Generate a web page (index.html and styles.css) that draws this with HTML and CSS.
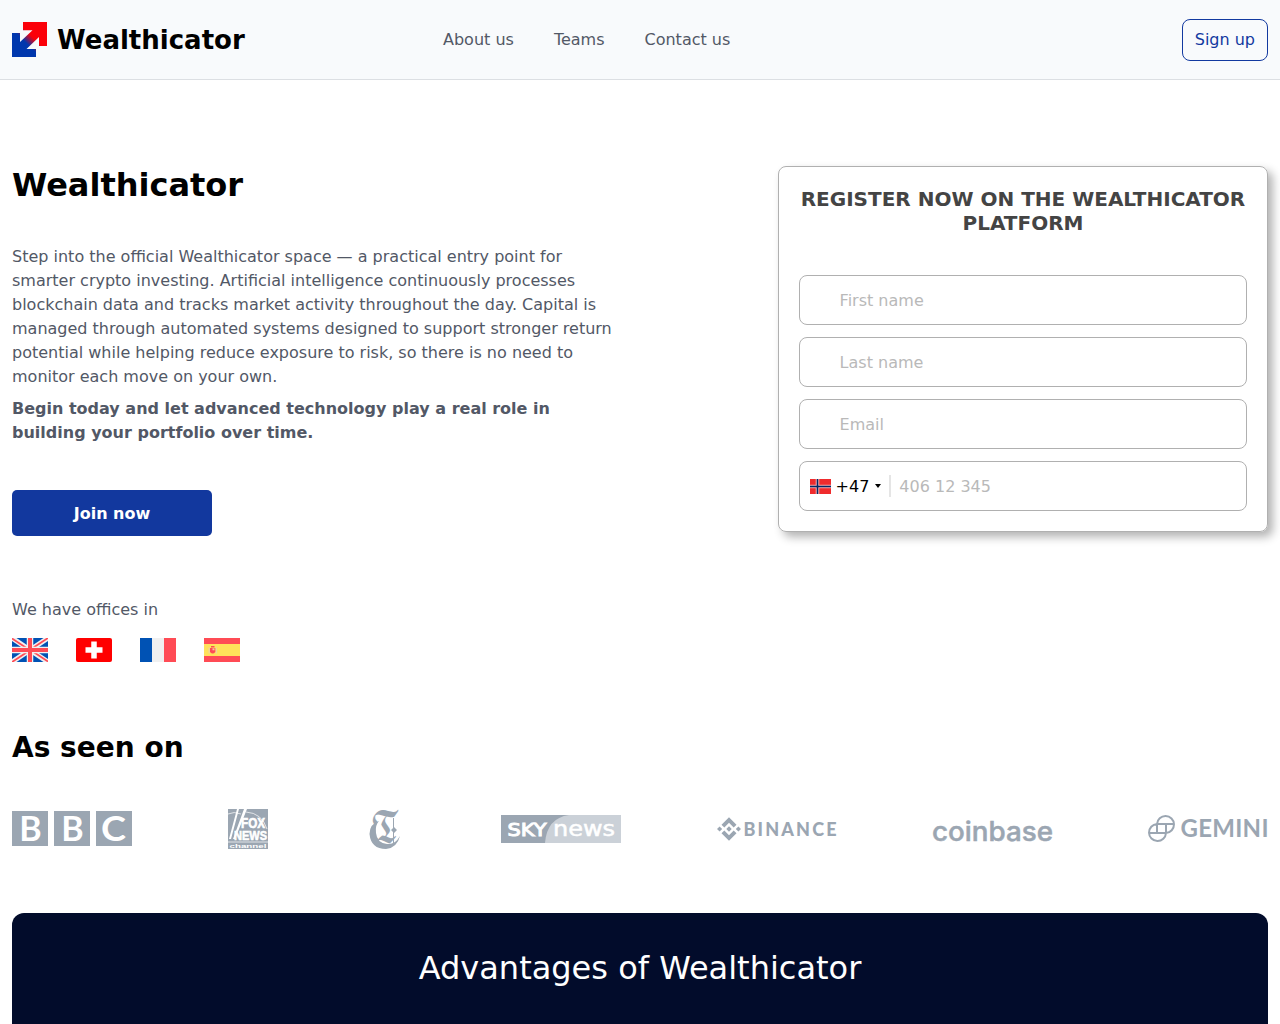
FILE: index.html
```html
<!DOCTYPE html>
<html lang="en">

<head>
    <meta charset="UTF-8">
    <meta name="viewport" content="width=device-width, initial-scale=1.0">
    <title>Wealthicator</title>
    <link rel="stylesheet" href="styles.css">
</head>

<body>
    <header class="header">
        <a class="logo" href="#">
            <svg width="35" height="35" viewBox="0 0 35 35">
                <defs>
                    <linearGradient id="arrows" x1="0" y1="1" x2="1" y2="0">
                        <stop offset="0.4" stop-color="#0037ad"/>
                        <stop offset="0.58" stop-color="#fb0009"/>
                    </linearGradient>
                </defs>
                <path d="M11 0H35V24H27V15L14.500 27H24V35H0V11H8V20L20.500 8.300H11Z" fill="url(#arrows)"/>
            </svg>
            <span>Wealthicator</span>
        </a>
        <nav class="nav">
            <a href="#">About us</a>
            <a href="#">Teams</a>
            <a href="#">Contact us</a>
        </nav>
        <a class="sign-up" href="#register">Sign up</a>
    </header>

    <main class="container">
        <section class="hero">
            <div class="hero-text">
                <h1>Wealthicator</h1>
                <p>Step into the official Wealthicator space — a practical entry point for smarter crypto investing. Artificial intelligence continuously processes blockchain data and tracks market activity throughout the day. Capital is managed through automated systems designed to support stronger return potential while helping reduce exposure to risk, so there is no need to monitor each move on your own.</p>
                <p><b>Begin today and let advanced technology play a real role in building your portfolio over time.</b></p>
                <a class="join" href="#register">Join now</a>
                <div class="offices">We have offices in</div>
                <div class="flags">
                    <svg width="36" height="24" viewBox="0 0 36 24">
                        <path fill="#0052b4" d="M0 0h36v24H0z"/>
                        <path stroke="#f0f0f0" stroke-width="5" d="M0 0L36 24M36 0L0 24"/>
                        <path stroke="#ff4b55" stroke-width="1.800" d="M0 .5L16 11M36 0L20 10.500M0 24L16 13.500M36 23.500L20 13"/>
                        <path stroke="#f0f0f0" stroke-width="6.500" d="M18 0v24M0 12h36"/>
                        <path stroke="#ff4b55" stroke-width="4" d="M18 0v24M0 12h36"/>
                    </svg>
                    <svg width="36" height="24" viewBox="0 0 36 24">
                        <rect width="36" height="24" rx="2" fill="#f00"/>
                        <path stroke="#fff" stroke-width="5.500" d="M18 3.500v17M9.500 12h17"/>
                    </svg>
                    <svg width="36" height="24" viewBox="0 0 36 24">
                        <path fill="#0052b4" d="M0 0h12v24H0z"/>
                        <path fill="#f0f0f0" d="M12 0h12v24H12z"/>
                        <path fill="#ff4b55" d="M24 0h12v24H24z"/>
                    </svg>
                    <svg width="36" height="24" viewBox="0 0 36 24">
                        <path fill="#ff4b55" d="M0 0h36v24H0z"/>
                        <path fill="#ffe15a" d="M0 6h36v12H0z"/>
                        <path fill="#f1d0a0" d="M4.500 9.500h1.300v6H4.500zM11.700 9.500H13v6h-1.300z"/>
                        <path fill="#ff4b55" d="M6 10h5.300v4q-2.500 3-5.300 0zM7 8h3.500v1.500H7z"/>
                        <path fill="#f3c4a0" d="M8.500 10.300h2v2h-2z"/>
                    </svg>
                </div>
            </div>

            <form class="register" id="register">
                <h2>REGISTER NOW ON THE WEALTHICATOR PLATFORM</h2>
                <input class="field" type="text" placeholder="First name">
                <input class="field" type="text" placeholder="Last name">
                <input class="field" type="email" placeholder="Email">
                <div class="field phone">
                    <svg width="21" height="15" viewBox="0 0 21 15">
                        <path fill="#ef2b2d" d="M0 0h21v15H0z"/>
                        <path stroke="#fff" stroke-width="3.600" stroke-opacity=".6" d="M7.500 0v15M0 7.500h21"/>
                        <path stroke="#002868" stroke-width="1.500" d="M7.500 0v15M0 7.500h21"/>
                    </svg>
                    <span class="code">+47</span>
                    <span class="caret"></span>
                    <input type="tel" placeholder="406 12 345">
                </div>
            </form>
        </section>

        <section class="seen-on">
            <h2>As seen on</h2>
            <div class="brands">
                <!-- BBC -->
                <svg width="120" height="40" viewBox="0 0 120 40" font-family="Lato, sans-serif" font-weight="bold" font-size="34" text-anchor="middle">
                    <path fill="#9ba6b2" d="M0 2h36v35H0zM42 2h36v35H42zM84 2h36v35H84z"/>
                    <text fill="#fff" x="18.500" y="31.500">B</text>
                    <text fill="#fff" x="60.500" y="31.500">B</text>
                    <text fill="#fff" x="101.500" y="31.500" textLength="25" lengthAdjust="spacingAndGlyphs">C</text>
                </svg>
                <!-- Fox News -->
                <svg width="40" height="40" viewBox="0 0 40 40" font-family="Liberation Sans, sans-serif" font-weight="bold">
                    <path fill="#9ba6b2" d="M0 0h40v40H0z"/>
                    <path fill="#fff" d="M9 0h2L3 30H1zM16 0h3L7 30H5z"/>
                    <path fill="none" stroke="#fff" stroke-width=".7" d="M0 5Q6 2 13 5M18 3Q34 4 39 20M0 33h40"/>
                    <text fill="#fff" stroke="#fff" stroke-width=".6" x="13" y="19" font-size="14" textLength="24" lengthAdjust="spacingAndGlyphs">FOX</text>
                    <text fill="#fff" stroke="#fff" stroke-width=".6" x="6" y="31" font-size="13" textLength="33" lengthAdjust="spacingAndGlyphs">NEWS</text>
                    <text fill="#fff" x="1.500" y="38.500" font-size="5.500" textLength="37" lengthAdjust="spacingAndGlyphs">channel</text>
                </svg>
                <!-- The New York Times -->
                <svg width="41" height="40" viewBox="0 0 41 40">
                    <path fill="#9ba6b2" d="M15 12Q5.500 15 5.500 25Q7 40 22 40Q33 39 36 27Q31 36 23 35Q13 34 12 24Q11 16 15 12zM30 18l3 3-3 3-3-3z"/>
                    <path stroke="#9ba6b2" d="M29.500 9v25"/>
                    <text class="times" x="21.500" y="33" font-size="41" text-anchor="middle" textLength="30" lengthAdjust="spacingAndGlyphs">𝕿</text>
                </svg>
                <!-- Sky News -->
                <svg width="120" height="40" viewBox="0 0 120 40" font-family="DejaVu Sans, sans-serif">
                    <path fill="#9ba6b2" d="M0 6h120v28H0z"/>
                    <path fill="#cbd1d8" d="M120 6H68Q46 9 44 34h76z"/>
                    <text fill="#fff" stroke="#fff" stroke-width="1" x="6.500" y="26.500" font-size="18" textLength="39" lengthAdjust="spacingAndGlyphs">SKY</text>
                    <text fill="#fff" stroke="#fff" stroke-width=".5" x="52" y="26.500" font-size="21" textLength="62" lengthAdjust="spacingAndGlyphs">news</text>
                </svg>
                <!-- Binance -->
                <svg width="120" height="40" viewBox="0 0 120 40" fill="#9ba6b2">
                    <path d="M4.500 15.700L12 8.200l7.500 7.500-2.800 2.800L12 13.800l-4.700 4.700zM4.500 24.300l2.800-2.800L12 26.200l4.700-4.700 2.800 2.800L12 31.800zM0 20l2.600-2.600L5.200 20l-2.600 2.600zM18.800 20l2.600-2.600L24 20l-2.600 2.600zM9.300 20L12 17.300l2.700 2.700-2.700 2.700z"/>
                    <text x="26.500" y="26.500" font-family="Lato, sans-serif" font-size="18" font-weight="900" textLength="93">BINANCE</text>
                </svg>
                <!-- Coinbase -->
                <svg width="120" height="40" viewBox="0 0 120 40" fill="#9ba6b2">
                    <text x="-1" y="31.500" font-family="Inter, sans-serif" font-size="27" font-weight="500" stroke="#9ba6b2" stroke-width=".5" textLength="121" lengthAdjust="spacingAndGlyphs">coinbase</text>
                </svg>
                <!-- Gemini -->
                <svg width="119" height="40" viewBox="0 0 119 40" fill="#9ba6b2">
                    <path fill="none" stroke="#9ba6b2" stroke-width="2" d="M8 15a8.500 8.500 0 1 1 9 9H8zM17 15v9a8.500 8.500 0 1 1-9-9zM0 24h8M17 15h7"/>
                    <text x="31.500" y="28" font-family="Lato, sans-serif" font-size="24" font-weight="bold" textLength="88">GEMINI</text>
                </svg>
            </div>
        </section>

        <section class="advantages">
            <h2>Advantages of Wealthicator</h2>
        </section>
    </main>
</body>

</html>
```
FILE: styles.css
```css
* {
    box-sizing: border-box;
}

body,
html {
    margin: 0;
    padding: 0;
    font-family: "DejaVu Sans", sans-serif;
    font-size: 16px;
    line-height: 24px;
    color: #525866;
}

a {
    color: inherit;
    text-decoration: none;
}

h1,
h2,
p {
    margin: 0;
}

svg {
    display: block;
    flex-shrink: 0;
}

.header {
    display: flex;
    align-items: center;
    height: 80px;
    padding: 0 12px;
    background: #f8fafc;
    border-bottom: 1px solid #dcdfe3;
}

.logo {
    display: flex;
    align-items: center;
    gap: 10px;
    width: 233px;
    font-size: 26px;
    font-weight: bold;
    color: #000;
}

.nav {
    display: flex;
    gap: 40px;
    margin-left: 198px;
}

.sign-up {
    margin-left: auto;
    padding: 8px 12px;
    border: 1px solid #1239a0;
    border-radius: 8px;
    color: #1239a0;
}

.container {
    padding: 0 12px;
}

.hero {
    display: flex;
    justify-content: space-between;
    align-items: flex-start;
    padding-top: 86px;
}

.hero-text {
    width: 608px;
}

.hero-text h1 {
    margin-bottom: 41px;
    font-size: 32px;
    line-height: 38px;
    color: #000;
}

.hero-text p {
    margin-bottom: 8px;
}

.join {
    display: block;
    width: 200px;
    margin-top: 45px;
    padding: 12px 11px 10px;
    border-radius: 5px;
    background: #12389e;
    color: #fff;
    font-weight: bold;
    text-align: center;
}

.offices {
    margin-top: 62px;
}

.flags {
    display: flex;
    gap: 28px;
    margin-top: 16px;
}

.register {
    display: flex;
    flex-direction: column;
    gap: 12px;
    width: 490px;
    padding: 20px;
    border: 1px solid #b0b0b0;
    border-radius: 8px;
    box-shadow: 5px 5px 10px rgba(0, 0, 0, 0.3);
}

.register h2 {
    margin-bottom: 28px;
    font-size: 20px;
    line-height: 24px;
    text-align: center;
    color: #444;
}

.field {
    width: 100%;
    height: 50px;
    padding: 0 39.6px;
    border: 1px solid #b0b0b0;
    border-radius: 8px;
    background: #fff;
    font: inherit;
}

input::placeholder {
    color: #b9b9b9;
}

.phone {
    display: flex;
    align-items: center;
    padding: 0 9.6px;
}

.phone .code {
    margin-left: 5px;
    padding-top: 1px;
    color: #000;
}

.phone .caret {
    margin-left: 6px;
    border: 3px solid transparent;
    border-top: 4px solid #000;
    border-bottom: 0;
}

.phone input {
    flex: 1;
    min-width: 0;
    height: 22px;
    margin-left: 8px;
    padding: 1px 0 0 8px;
    border: 0;
    border-left: 2px solid #e5e5e5;
    font: inherit;
}

.seen-on h2 {
    margin: 69px 0 44px;
    font-size: 28px;
    line-height: 34px;
    color: #000;
}

.brands {
    display: flex;
    justify-content: space-between;
}

.brands svg {
    overflow: visible;
}

.times {
    fill: #9ba6b2;
    font-family: "DejaVu Math TeX Gyre", "DejaVu Serif", serif;
}

.advantages {
    margin-top: 64px;
    padding: 36px 20px;
    height: 111px;
    border-radius: 12px 12px 0 0;
    background: #020c2b;
    color: #fff;
    text-align: center;
}

.advantages h2 {
    font-size: 32px;
    line-height: 38px;
    font-weight: normal;
}
```
